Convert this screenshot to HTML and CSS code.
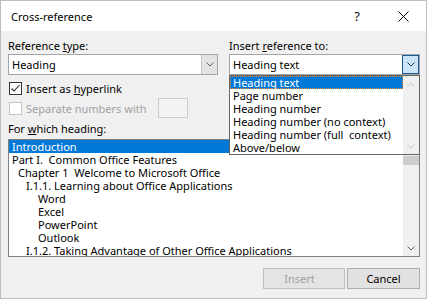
FILE: index.html
```html
<!DOCTYPE html>
<html>
<head>
<meta charset="utf-8">
<link rel="stylesheet" href="styles.css">
</head>
<body>
<div class="window">
  <div class="titlebar">
    <span class="title">Cross-reference</span>
    <span class="tbtn help">?</span>
    <span class="tbtn close"><svg width="11" height="11" viewBox="0 0 11 11"><path d="M0.5 0.5 L10.5 10.5 M10.5 0.5 L0.5 10.5" stroke="#000" stroke-width="1" fill="none"/></svg></span>
  </div>
  <div class="body">
    <div class="top">
      <div class="col">
        <div class="label">Reference <u>t</u>ype:</div>
        <div class="combo">
          <span class="value">Heading</span>
          <span class="cbtn"><svg width="8" height="5" viewBox="0 0 8 5"><polyline points="0.5,0.5 4,4 7.5,0.5" stroke="#606060" fill="none"/></svg></span>
        </div>
      </div>
      <div class="col">
        <div class="label">Insert <u>r</u>eference to:</div>
        <div class="combo-wrap">
          <div class="combo">
            <span class="value">Heading text</span>
            <span class="cbtn focus"><svg width="8" height="5" viewBox="0 0 8 5"><polyline points="0.5,0.5 4,4 7.5,0.5" stroke="#333" fill="none"/></svg></span>
          </div>
          <div class="dropdown">
            <div class="dd-items">
              <div class="dd-item sel">Heading text</div>
              <div class="dd-item">Page number</div>
              <div class="dd-item">Heading number</div>
              <div class="dd-item">Heading number (no context)</div>
              <div class="dd-item">Heading number (full&nbsp; context)</div>
              <div class="dd-item">Above/below</div>
            </div>
            <div class="vscroll">
              <span class="arrow"><svg width="8" height="5" viewBox="0 0 8 5"><polyline points="0.5,4.5 4,1 7.5,4.5" stroke="#c4c4c4" fill="none"/></svg></span>
              <span class="arrow"><svg width="8" height="5" viewBox="0 0 8 5"><polyline points="0.5,0.5 4,4 7.5,0.5" stroke="#c4c4c4" fill="none"/></svg></span>
            </div>
          </div>
        </div>
      </div>
    </div>

    <div class="check-row">
      <span class="checkbox"><svg width="11" height="11" viewBox="0 0 11 11"><polyline points="1.5,5.5 4,8 9.5,2" stroke="#222" stroke-width="1.1" fill="none"/></svg></span>
      <span class="ctext">Insert as <u>h</u>yperlink</span>
    </div>
    <div class="check-row sep disabled">
      <span class="checkbox"></span>
      <span class="ctext">Separate numbers with</span>
      <span class="numbox"></span>
    </div>

    <div class="label for">For <u>w</u>hich heading:</div>
    <div class="listbox">
      <div class="lb-items">
        <div class="li sel">Introduction</div>
        <div class="li">Part I.&nbsp; Common Office Features</div>
        <div class="li ind1">Chapter 1&nbsp; Welcome to Microsoft Office</div>
        <div class="li ind2">I.1.1. Learning about Office Applications</div>
        <div class="li ind3">Word</div>
        <div class="li ind3">Excel</div>
        <div class="li ind3">PowerPoint</div>
        <div class="li ind3">Outlook</div>
        <div class="li ind2">I.1.2. Taking Advantage of Other Office Applications</div>
      </div>
      <div class="vscroll lb">
        <span class="arrow"><svg width="8" height="5" viewBox="0 0 8 5"><polyline points="0.5,4.5 4,1 7.5,4.5" stroke="#606060" fill="none"/></svg></span>
        <span class="thumb"></span>
        <span class="spacer"></span>
        <span class="arrow"><svg width="8" height="5" viewBox="0 0 8 5"><polyline points="0.5,0.5 4,4 7.5,0.5" stroke="#606060" fill="none"/></svg></span>
      </div>
    </div>

    <div class="buttons">
      <span class="button insert">Insert</span>
      <span class="button cancel">Cancel</span>
    </div>
  </div>
</div>
</body>
</html>
```

FILE: styles.css
```css
* { box-sizing: border-box; }
html, body { margin: 0; padding: 0; background: #fff; }
body {
  font-family: "Noto Sans", "Segoe UI", sans-serif;
  font-size: 11px;
  color: #000;
}
u { text-decoration: underline; text-underline-offset: 1px; }

.window {
  width: 427px;
  height: 299px;
  border: 1px solid #bcbcbc;
  background: #f0f0f0;
  display: flex;
  flex-direction: column;
}

.titlebar {
  flex: none;
  height: 30px;
  background: #fff;
  display: flex;
  align-items: center;
  padding-left: 10px;
}
.title { flex: 1; white-space: nowrap; }
.tbtn {
  width: 46px;
  height: 30px;
  display: flex;
  align-items: center;
  justify-content: center;
}
.help { font-size: 13px; color: #111; padding-bottom: 1px; }

.body {
  flex: 1;
  padding: 7px 6px 0 7px;
  display: flex;
  flex-direction: column;
}

.top {
  display: grid;
  grid-template-columns: 210px 191px;
  column-gap: 11px;
}
.label {
  line-height: 15px;
  margin-bottom: 1px;
  white-space: nowrap;
}
.combo-wrap { position: relative; }
.combo {
  height: 21px;
  border: 1px solid #a5a5a5;
  background: #fff;
  display: flex;
}
.combo .value {
  flex: 1;
  padding-left: 3px;
  line-height: 19px;
  white-space: nowrap;
}
.cbtn {
  width: 16px;
  background: #e3e3e3;
  border-left: 1px solid #c3c3c3;
  display: flex;
  align-items: center;
  justify-content: center;
}
.cbtn.focus {
  background: #cce4f7;
  border: 1px solid #1a5a96;
  width: 17px;
}

.dropdown {
  position: absolute;
  top: 21px;
  left: 0;
  width: 191px;
  height: 80px;
  border: 1px solid #646464;
  background: #fff;
  display: flex;
  z-index: 2;
}
.dd-items { flex: 1; }
.dd-item {
  height: 13px;
  line-height: 13px;
  padding-left: 3px;
  white-space: nowrap;
}
.dd-item.sel {
  background: #0078d7;
  color: #fff;
  outline: 1px dotted #ff8a2a;
  outline-offset: -1px;
}

.vscroll {
  width: 16px;
  background: #f0f0f0;
  display: flex;
  flex-direction: column;
  justify-content: space-between;
}
.vscroll .arrow {
  height: 16px;
  display: flex;
  align-items: center;
  justify-content: center;
}
.vscroll.lb { justify-content: flex-start; }
.thumb { height: 9px; background: #cdcdcd; }
.spacer { flex: 1; }

.check-row {
  margin-top: 7px;
  height: 13px;
  display: flex;
  align-items: center;
  padding-left: 1px;
}
.checkbox {
  width: 13px;
  height: 13px;
  border: 1px solid #333;
  background: #fff;
  display: flex;
  align-items: center;
  justify-content: center;
}
.ctext { margin-left: 4px; white-space: nowrap; line-height: 15px; }
.check-row.sep { margin-top: 3px; height: 20px; }
.disabled .checkbox { border-color: #c6c6c6; }
.disabled .ctext { color: #a0a0a0; }
.numbox {
  width: 30px;
  height: 20px;
  margin-left: 12px;
  border: 1px solid #cccccc;
  background: #f3f3f3;
}

.label.for { margin-top: 3px; margin-bottom: 0; }
.listbox {
  margin-top: 3px;
  height: 118px;
  border: 1px solid #7f7f7f;
  background: #fff;
  display: flex;
  overflow: hidden;
}
.lb-items { flex: 1; overflow: hidden; }
.li {
  height: 13px;
  line-height: 13px;
  padding-left: 3px;
  white-space: nowrap;
}
.li.sel { background: #0078d7; color: #fff; }
.li.ind1 { padding-left: 9px; }
.li.ind2 { padding-left: 17px; }
.li.ind3 { padding-left: 29px; }

.buttons {
  margin-top: 11px;
  display: flex;
  justify-content: flex-end;
  gap: 2px;
}
.button {
  height: 21px;
  display: flex;
  align-items: center;
  justify-content: center;
  border: 1px solid #adadad;
  background: #e1e1e1;
}
.button.insert {
  width: 82px;
  padding-right: 9px;
  border-color: #bfbfbf;
  background: #e4e4e4;
  color: #a0a0a0;
}
.button.cancel { width: 73px; }
```
